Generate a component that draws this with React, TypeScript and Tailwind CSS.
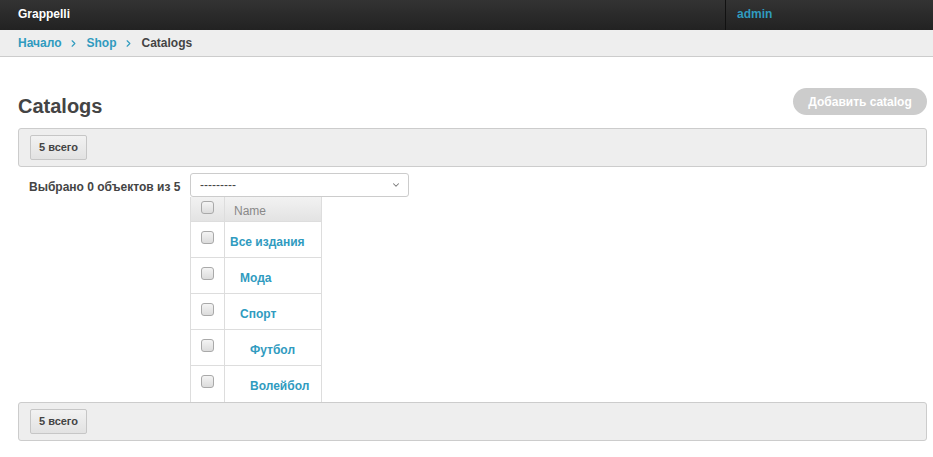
import { ChevronRight, ChevronDown } from 'lucide-react';

const Checkbox = () => (
  <span className="block w-[13px] h-[13px] rounded-[3px] border border-[#a9a9a9] bg-gradient-to-b from-[#f4f4f4] to-[#dcdcdc]" />
);

const Toolbar = () => (
  <div className="h-[39px] bg-[#eee] border border-[#ccc] rounded-[3px] flex items-center pl-[11px]">
    <span className="h-[25px] w-[57px] flex items-center justify-center bg-gradient-to-b from-[#f2f2f2] to-[#e2e2e2] border border-[#c6c6c6] rounded-[2px] text-[11px] font-bold text-[#444]">
      5 всего
    </span>
  </div>
);

const rows = [
  { name: 'Все издания', indent: 'pl-[5px]' },
  { name: 'Мода', indent: 'pl-[15px]' },
  { name: 'Спорт', indent: 'pl-[15px]' },
  { name: 'Футбол', indent: 'pl-[25px]' },
  { name: 'Волейбол', indent: 'pl-[25px]' },
];

export default function App() {
  return (
    <div className="min-h-[457px] bg-white font-['Liberation_Sans',Arial,sans-serif] text-[#444]">
      <div className="h-[30px] bg-gradient-to-b from-[#333] to-[#222] flex">
        <div className="flex-1 pl-[18px] pt-[5px] text-[12px] font-bold text-white">Grappelli</div>
        <div className="w-[208px] border-l border-[#111] pl-[11px] pt-[5px] text-[12px] font-bold text-[#309bbf]">
          admin
        </div>
      </div>

      <div className="h-[27px] bg-[#eee] border-b border-[#ccc] flex items-center pl-[18px] text-[12px] font-bold">
        <span className="text-[#309bbf]">Начало</span>
        <ChevronRight className="w-[11px] h-[11px] mx-[7px] text-[#309bbf]" strokeWidth={2.5} />
        <span className="text-[#309bbf]">Shop</span>
        <ChevronRight className="w-[11px] h-[11px] mx-[7px] text-[#309bbf]" strokeWidth={2.5} />
        <span className="text-[#444]">Catalogs</span>
      </div>

      <div className="pl-[18px] pr-[6px]">
        <div className="mt-[31px] h-[27px] flex items-center justify-between">
          <h1 className="text-[20px] font-bold text-[#444] pt-[8px]">Catalogs</h1>
          <span className="h-[27px] w-[134px] rounded-full bg-[#ccc] text-white text-[12px] font-bold flex items-center justify-center">
            Добавить catalog
          </span>
        </div>

        <div className="mt-[13px]">
          <Toolbar />
        </div>

        <div className="mt-[6px] flex">
          <div className="w-[172px] pl-[11px] pt-[5px] text-[12px] font-bold text-[#444]">
            Выбрано 0 объектов из 5
          </div>
          <div>
            <div className="w-[219px] h-[24px] border border-[#ccc] rounded-[3px] flex items-center justify-between pl-[9px] pr-[7px] text-[12px] text-[#444]">
              <span>---------</span>
              <ChevronDown className="w-[10px] h-[10px] text-[#777]" strokeWidth={2.5} />
            </div>
            <div className="w-[132px] border-x border-[#ddd]">
              <div className="h-[25px] flex bg-gradient-to-b from-[#f2f2f2] to-[#e3e3e3] border-b border-[#ddd]">
                <div className="w-[34px] border-r border-[#ddd] pl-[10px] pt-[4px]">
                  <Checkbox />
                </div>
                <div className="flex-1 pl-[9px] pt-[5px] text-[12px] text-[#888]">Name</div>
              </div>
              {rows.map((r, i) => (
                <div key={i} className={`h-[36px] flex ${i < rows.length - 1 ? 'border-b border-[#ddd]' : ''}`}>
                  <div className="w-[34px] border-r border-[#ddd] pl-[10px] pt-[9px]">
                    <Checkbox />
                  </div>
                  <div className={`flex-1 pt-[11px] text-[12px] font-bold text-[#309bbf] ${r.indent}`}>{r.name}</div>
                </div>
              ))}
            </div>
          </div>
        </div>

        <Toolbar />
      </div>
    </div>
  );
}
